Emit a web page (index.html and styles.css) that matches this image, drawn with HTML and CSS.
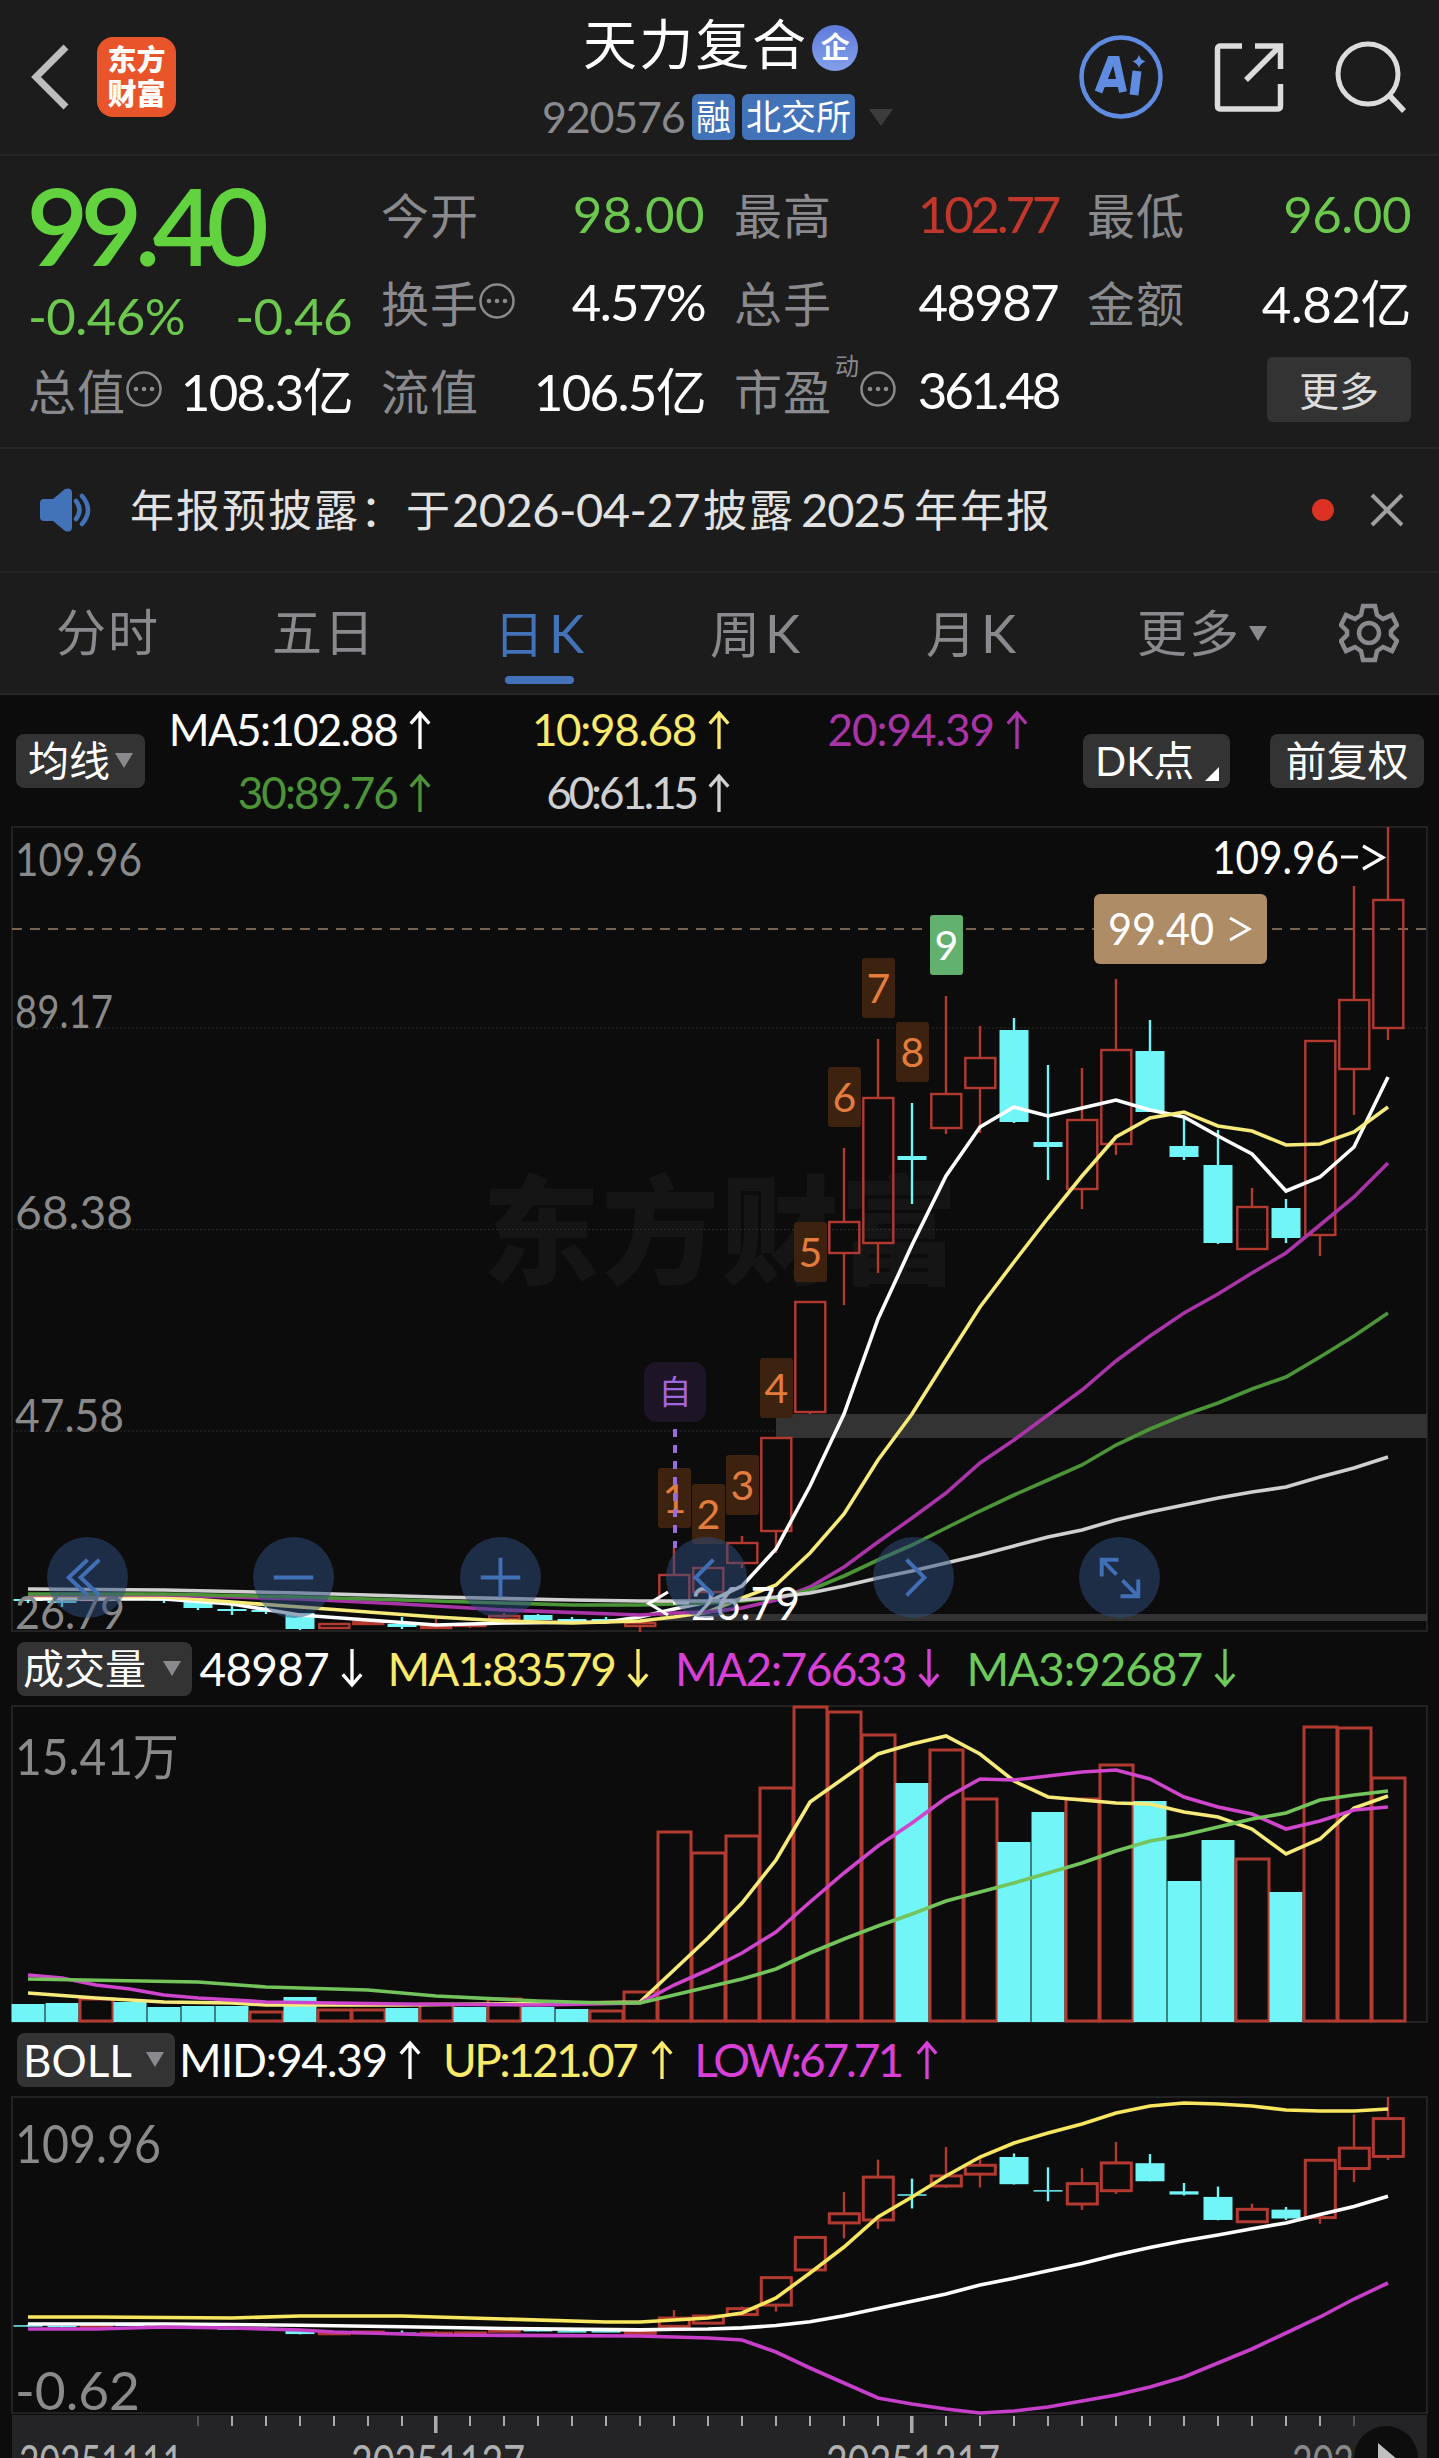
FILE: index.html
```html
<!DOCTYPE html>
<html lang="zh-CN">
<head>
  <meta charset="UTF-8" />
  <meta name="viewport" content="width=device-width, initial-scale=1" />
  <title>天力复合 920576</title>
  <link rel="stylesheet" href="styles.css">
</head>
<body>

  <svg class="defs" width="0" height="0">
    <symbol id="arrow-up" viewBox="0 0 22 40"><path d="M11 40V3M1.5 14L11 3l9.500 11" fill="none" stroke="currentColor" stroke-width="3.400" /></symbol>
    <symbol id="arrow-down" viewBox="0 0 22 40"><path d="M11 0v37M1.500 26L11 37l9.500-11" fill="none" stroke="currentColor" stroke-width="3.400" /></symbol>
    <symbol id="info" viewBox="0 0 36 36">
      <circle cx="18" cy="18" r="16.500" fill="none" stroke="currentColor" stroke-width="2.500" />
      <circle cx="10" cy="18" r="2.300" fill="currentColor" /><circle cx="18" cy="18" r="2.300" fill="currentColor" /><circle cx="26" cy="18" r="2.300" fill="currentColor" />
    </symbol>
  </svg>

  <header class="topbar">
    <div class="topbar-left">
      <svg class="back" width="40" height="66" viewBox="0 0 40 66"><path d="M36 3L6 33l30 30" fill="none" stroke="#bdbdbd" stroke-width="7" /></svg>
      <div class="logo"><span>东方</span><span>财富</span></div>
    </div>
    <div class="stock">
      <div class="stock-name">天力复合<span class="corp">企</span></div>
      <div class="stock-code">
        <span class="code">920576</span>
        <span class="tag tag-rong">融</span>
        <span class="tag tag-bse">北交所</span>
        <span class="tri tri-dark"></span>
      </div>
    </div>
    <div class="topbar-icons">
      <svg width="84" height="84" viewBox="0 0 84 84">
        <circle cx="42" cy="42" r="39.500" fill="none" stroke="#5f8ce0" stroke-width="4.500" />
        <g fill="none" stroke="#5f8ce0" stroke-width="8"><path d="M19.500 57L32 25h5l7 32M25 48h15" /><path d="M58 36l-3 24" stroke-width="9" /></g>
        <path d="M60 20q1.500 5 6.500 6.500q-5 1.500-6.500 6.500q-1.500-5-6.500-6.500q5-1.500 6.500-6.500z" fill="#5f8ce0" />
      </svg>
      <svg width="70" height="70" viewBox="0 0 70 70"><path d="M28 4H7Q3.500 4 3.500 7v57q0 3 3.500 3h56q3.500 0 3.500-3V42M41 4h25.500v23M65 5L32 38" fill="none" stroke="#dcdcdc" stroke-width="5.500" /></svg>
      <svg width="72" height="72" viewBox="0 0 72 72"><circle cx="33" cy="33" r="30" fill="none" stroke="#dcdcdc" stroke-width="5" /><path d="M54 54l15 16" stroke="#dcdcdc" stroke-width="5.500" /></svg>
    </div>
  </header>

  <section class="quote">
    <div class="quote-col">
      <div class="price">99.40</div>
      <div class="change green"><span>-0.46%</span><span>-0.46</span></div>
      <div class="cell"><label>总值<svg class="info"><use href="#info" /></svg></label><b class="snug">108.3亿</b></div>
    </div>
    <div class="quote-col">
      <div class="cell"><label>今开</label><b class="green wide">98.00</b></div>
      <div class="cell"><label>换手<svg class="info"><use href="#info" /></svg></label><b class="snug">4.57%</b></div>
      <div class="cell"><label>流值</label><b class="snug">106.5亿</b></div>
    </div>
    <div class="quote-col">
      <div class="cell"><label>最高</label><b class="red tight">102.77</b></div>
      <div class="cell"><label>总手</label><b class="snug">48987</b></div>
      <div class="cell"><label>市盈<sup>动</sup><svg class="info"><use href="#info" /></svg></label><b class="tight">361.48</b></div>
    </div>
    <div class="quote-col">
      <div class="cell"><label>最低</label><b class="green">96.00</b></div>
      <div class="cell"><label>金额</label><b>4.82亿</b></div>
      <div class="cell cell-end"><button class="btn-more">更多</button></div>
    </div>
  </section>

  <section class="notice">
    <svg width="52" height="44" viewBox="0 0 52 44">
      <path d="M4 11h9L25 1q7-2 7 4v34q0 6-7 4L13 33H4q-4 0-4-4V15q0-4 4-4z" fill="#4272b8" />
      <path d="M36 13q7 9 0 18M42 8q12 14 0 28" fill="none" stroke="#4272b8" stroke-width="4.500" stroke-linecap="round" />
    </svg>
    <p>年报预披露：于<i>2026-04-27</i>披露<i class="year">2025</i>年年报</p>
    <span class="dot"></span>
    <svg width="34" height="34" viewBox="0 0 34 34"><path d="M2 2l30 30M32 2L2 32" stroke="#a0a0a0" stroke-width="4" /></svg>
  </section>

  <nav class="tabs">
    <a>分时</a>
    <a>五日</a>
    <a class="active">日<i>K</i></a>
    <a>周<i>K</i></a>
    <a>月<i>K</i></a>
    <a class="tab-more">更多<span class="tri"></span></a>
    <svg width="60" height="60" viewBox="0 0 60 60" fill="none" stroke="#8a8a8e" stroke-width="4.500">
      <path d="M24 3h12l2 9 6 4 9-4 5 10-6 6v4l6 6-5 10-9-4-6 4-2 9H24l-2-9-6-4-9 4-5-10 6-6v-4l-6-6 5-10 9 4 6-4z" />
      <circle cx="30" cy="30" r="10" />
    </svg>
  </nav>

  <section class="legend">
    <button class="chip chip-ma">均线<span class="tri"></span></button>
    <div class="ma-grid">
      <span class="c-white m5">MA5:102.88<svg class="arw"><use href="#arrow-up" /></svg></span>
      <span class="c-yellow m10">10:98.68<svg class="arw"><use href="#arrow-up" /></svg></span>
      <span class="c-purple">20:94.39<svg class="arw"><use href="#arrow-up" /></svg></span>
      <span class="c-green m30">30:89.76<svg class="arw"><use href="#arrow-up" /></svg></span>
      <span class="c-grey m60">60:61.15<svg class="arw"><use href="#arrow-up" /></svg></span>
    </div>
    <button class="chip chip-dk">DK点<span class="corner"></span></button>
    <button class="chip chip-fq">前复权</button>
  </section>

  <section class="k-chart">
    <svg id="k-chart" width="1439" height="806" viewBox="0 826 1439 806"></svg>
    <div class="controls">
      <button><svg viewBox="0 0 82 82"><path d="M41 23L22 41l19 18M53 23L34 41l19 18" /></svg></button>
      <button><svg viewBox="0 0 82 82"><path d="M21 41h40" /></svg></button>
      <button><svg viewBox="0 0 82 82"><path d="M21 41h40M41 21v40" /></svg></button>
      <button><svg viewBox="0 0 82 82"><path d="M48 23L30 41l18 18" /></svg></button>
      <button><svg viewBox="0 0 82 82"><path d="M34 23l18 18-18 18" /></svg></button>
      <button><svg viewBox="0 0 82 82"><path d="M38 38L23 23M23 40V23h17M44 44l15 15M60 43v17H42" /></svg></button>
    </div>
  </section>

  <section class="indicator">
    <button class="chip chip-vol">成交量<span class="tri"></span></button>
    <span class="c-white v0">48987<svg class="arw"><use href="#arrow-down" /></svg></span>
    <span class="c-yellow v1">MA1:83579<svg class="arw"><use href="#arrow-down" /></svg></span>
    <span class="c-magenta v2">MA2:76633<svg class="arw"><use href="#arrow-down" /></svg></span>
    <span class="c-lime v3">MA3:92687<svg class="arw"><use href="#arrow-down" /></svg></span>
  </section>
  <svg id="vol-chart" class="chart" width="1439" height="318" viewBox="0 1705 1439 318"></svg>

  <section class="indicator">
    <button class="chip chip-boll">BOLL<span class="tri"></span></button>
    <span class="c-white b0">MID:94.39<svg class="arw"><use href="#arrow-up" /></svg></span>
    <span class="c-yellow b1">UP:121.07<svg class="arw"><use href="#arrow-up" /></svg></span>
    <span class="c-magenta b2">LOW:67.71<svg class="arw"><use href="#arrow-up" /></svg></span>
  </section>
  <svg id="boll-chart" class="chart" width="1439" height="362" viewBox="0 2096 1439 362"></svg>

  <script>
    const RED = "#b23a31", CYAN = "#71f5f7";
    const STEP = 34, X0 = 28;
    const cx = i => X0 + i * STEP;

    // [up?, body top, body bottom, high, low]
    const candles = [
      [0,1599,1601,1597,1603],[0,1601,1603,1600,1607],[1,1599,1600,1598,1601],[0,1597,1598,1596,1599],[0,1599,1600,1599,1603],
      [0,1602,1608,1602,1610],[0,1609,1611,1605,1615],[0,1610,1612,1606,1614],[0,1613,1629,1613,1630],[1,1624,1628,1623,1629],
      [1,1622,1624,1621,1625],[0,1624,1627,1617,1629],[1,1626,1628,1619,1628],[1,1625,1626,1624,1628],[1,1616,1619,1613,1619],
      [0,1615,1620,1614,1620],[0,1619,1621,1617,1621],[0,1619,1621,1617,1621],[1,1623,1626,1622,1632],[1,1575,1603,1548,1603],
      [1,1568,1592,1568,1592],[1,1543,1563,1536,1568],[1,1438,1531,1438,1553],[1,1302,1412,1302,1414],[1,1222,1253,1148,1305],
      [1,1098,1243,1039,1273],[0,1156,1160,1103,1204],[1,1094,1128,996,1134],[1,1058,1088,1026,1133],[0,1030,1122,1018,1123],
      [0,1142,1147,1065,1180],[1,1120,1189,1068,1209],[1,1050,1144,979,1155],[0,1051,1112,1020,1112],[0,1146,1157,1118,1160],
      [0,1165,1243,1130,1244],[1,1207,1249,1188,1249],[0,1208,1238,1199,1243],[1,1041,1235,1041,1256],[1,1000,1069,886,1115],[1,900,1028,827,1040]
    ];
    const volume = [2004,2003,1998,2002,2007,2006,2006,2011,1997,2009,2009,2008,2003,2007,1998,2007,2009,2010,1991,1831,1852,1835,1787,1706,1711,1734,1783,1749,1798,1842,1812,1798,1764,1801,1881,1840,1858,1892,1726,1727,1777];
    const volDown = [0,1,3,4,5,6,8,11,13,15,16,26,29,30,33,34,35,37];

    // lines are [candle index, y] for the flat stretch, then one y per candle
    const ma5 = line([[0,1599],[4,1599],[6,1604],[8,1615],[10,1620],[12,1625],[14,1623],[17,1622],[18,1617]], [1609,1602,1586,1549,1486,1414,1319,1245,1176,1127,1107,1116,1108,1100,1110,1117,1136,1154,1191,1177,1147,1077]);
    const ma10 = line([[0,1596],[4,1597],[6,1602],[8,1607],[10,1612],[12,1617],[14,1621],[16,1623],[18,1621]], [1617,1612,1598,1585,1553,1514,1460,1414,1360,1307,1262,1218,1176,1137,1118,1112,1126,1131,1145,1144,1132,1107]);
    const ma20 = line([[0,1595],[4,1595],[8,1599],[11,1604],[14,1610],[18,1615]], [1613,1612,1608,1600,1587,1567,1542,1518,1493,1463,1440,1415,1390,1361,1336,1313,1294,1273,1253,1225,1197,1163]);
    const ma30 = line([[0,1594],[4,1594],[8,1597],[12,1601],[16,1605],[18,1605]], [1604,1603,1601,1598,1590,1576,1560,1545,1528,1511,1495,1480,1465,1445,1429,1415,1403,1389,1377,1357,1336,1313]);
    const ma60 = line([[0,1589],[4,1590],[8,1593],[12,1597],[16,1600],[18,1601]], [1601,1601,1600,1597,1593,1586,1578,1571,1563,1555,1546,1537,1530,1520,1512,1505,1498,1492,1487,1477,1468,1457]);
    const vol1 = line([[0,1993],[2,1998],[4,2002],[6,2003],[7,2005],[11,2005],[16,2003],[18,2002]], [1970,1938,1903,1860,1802,1778,1754,1744,1736,1754,1781,1797,1800,1803,1804,1812,1817,1829,1854,1839,1808,1796]);
    const vol2 = line([[0,1975],[1,1978],[2,1985],[3,1989],[4,1995],[5,1998],[7,2002],[11,2004],[15,2005],[18,2003]], [1985,1970,1953,1932,1902,1873,1846,1823,1798,1779,1780,1776,1772,1770,1779,1797,1807,1814,1829,1821,1810,1807]);
    const vol3 = line([[0,1979],[5,1982],[7,1987],[10,1990],[12,1996],[15,2001],[17,2003],[18,2003]], [1995,1987,1979,1969,1953,1939,1926,1914,1901,1892,1883,1873,1863,1851,1841,1835,1827,1819,1813,1800,1795,1791]);
    const up = line([[0,2317],[2,2317],[6,2318],[8,2316],[11,2316],[14,2319],[17,2322],[18,2322]], [2320,2318,2313,2298,2273,2247,2217,2197,2176,2157,2143,2133,2124,2113,2106,2103,2104,2106,2110,2111,2111,2109]);
    const low = line([[0,2329],[2,2329],[4,2327],[6,2328],[8,2330],[9,2332],[12,2335],[18,2336]], [2337,2338,2340,2352,2368,2383,2398,2404,2409,2413,2411,2407,2401,2395,2387,2377,2363,2349,2333,2317,2299,2283]);

    function line(flat, rest) {
      return flat.concat(rest.map((y, k) => [19 + k, y]));
    }

    // price chart y -> BOLL chart y
    const bollY = y => 2097 + (y - 827) * 0.2956;

    function path(points, color, w, f = y => y) {
      return `<polyline points="${points.map(p => cx(p[0]) + "," + f(p[1]).toFixed(1)).join(" ")}" fill="none" stroke="${color}" stroke-width="${w}" />`;
    }
    function rect(x, y, w, h, fill, extra = "") {
      return `<rect x="${x}" y="${y}" width="${w}" height="${h}" fill="${fill}" ${extra}/>`;
    }
    function hline(y, color, extra = "") {
      return `<line x1="12" x2="1427" y1="${y}" y2="${y}" stroke="${color}" ${extra}/>`;
    }
    function label(x, y, size, color, str, len) {
      return `<text x="${x}" y="${y}" font-size="${size}" fill="${color}" textLength="${len}" lengthAdjust="spacingAndGlyphs">${str}</text>`;
    }
    function candle(c, i, f, sw) {
      const x = cx(i), [isUp, t, b, hi, lo] = [c[0], f(c[1]), f(c[2]), f(c[3]), f(c[4])];
      if (!isUp) {
        return rect(x - 14.5, t, 29, Math.max(b - t, 1.5), CYAN) + rect(x - 1.2, hi, 2.4, lo - hi, CYAN);
      }
      return rect(x - 1.2, hi, 2.4, t - hi, RED) + rect(x - 1.2, b, 2.4, lo - b, RED) +
        rect(x - 14.7, t, 30, Math.max(b - t, 1), "none", `stroke="${RED}" stroke-width="${sw}"`);
    }
    const frame = (y, h) => rect(12, y, 1415, h, "none", 'stroke="#222223" stroke-width="2"');

    // price
    let k = `<text class="watermark" x="482" y="1275" font-size="118" textLength="476">东方财富</text>`;
    k += frame(827, 804);
    [1028, 1229.5, 1431].forEach(y => k += hline(y, "#2a2a2a", 'stroke-dasharray="2 2"'));
    k += rect(776, 1414, 651, 24, "#333") + rect(660, 1614, 767, 7, "#333");
    k += hline(929, "#786550", 'stroke-width="2" stroke-dasharray="10 8"');
    candles.forEach((c, i) => k += candle(c, i, y => y, 2.4));
    const nine = [[658,1468],[692,1484],[726,1455],[760,1358],[794,1222],[828,1067],[862,958],[896,1022],[930,915]];
    nine.forEach(([x, y], n) => {
      const last = n === 8;
      k += rect(x, y, 33, 60, last ? "#63b16f" : "#3d2210", 'rx="3"');
      k += `<text x="${x + 16.5}" y="${y + 45}" font-size="41" text-anchor="middle" fill="${last ? "#fff" : "#e37c3c"}">${n + 1}</text>`;
    });
    k += rect(644, 1362, 62, 60, "#1d1426", 'rx="13"') + `<text x="675" y="1404" font-size="33" text-anchor="middle" fill="#a367dd">自</text>`;
    k += `<line x1="675" x2="675" y1="1429" y2="1548" stroke="#9a6bdc" stroke-width="4" stroke-dasharray="8 8" />`;
    k += path(ma5, "#fff", 3.6) + path(ma10, "#f6ea7a", 3.6) + path(ma20, "#a934a8", 3.6) + path(ma30, "#4c9438", 3.6) + path(ma60, "#d0d0d0", 3.6);
    k += label(15, 876, 46, "#8a8a8a", "109.96", 127) + label(15, 1028, 46, "#8a8a8a", "89.17", 98) + label(15, 1229, 46, "#8a8a8a", "68.38", 118) + label(15, 1432, 46, "#8a8a8a", "47.58", 109) + label(15, 1629, 46, "#8a8a8a", "26.79", 110);
    k += rect(1094, 894, 173, 70, "#ae8c65", 'rx="6"') + label(1108, 945, 44, "#fff", "99.40", 106) + `<path d="M1230 918l19 11-19 11" fill="none" stroke="#fff" stroke-width="3" />`;
    k += label(1212, 874, 46, "#fff", "109.96", 127) + `<path d="M1341 857h17M1363 846l20 11.500-20 11.500" fill="none" stroke="#fff" stroke-width="3.200" />`;
    k += `<path d="M668 1592l-19 11.500 19 11.500M673 1603h16" fill="none" stroke="#fff" stroke-width="3.200" />` + label(691, 1620, 46, "#fff", "26.79", 109);
    document.getElementById("k-chart").innerHTML = k;

    // volume
    let v = frame(1706, 316);
    volume.forEach((y, i) => {
      const x = cx(i) - 17;
      v += volDown.includes(i) ? rect(x + .5, y, 33, 2022 - y, CYAN) : rect(x + 1, y + 1, 33, 2020 - y, "none", `stroke="${RED}" stroke-width="3"`);
    });
    v += path(vol1, "#f6ea7a", 3.6) + path(vol2, "#cf45cc", 3.6) + path(vol3, "#74c45c", 3.6);
    v += label(15, 1775, 50, "#8a8a8a", "15.41万", 164);
    document.getElementById("vol-chart").innerHTML = v;

    // BOLL and date axis
    let b = frame(2097, 316);
    candles.forEach((c, i) => b += candle(c, i, bollY, 3));
    b += path(ma20, "#fff", 3.6, bollY) + path(up, "#f6e660", 3.6) + path(low, "#c73fc9", 3.6);
    b += label(15, 2163, 53, "#8a8a8a", "109.96", 146) + label(15, 2410, 53, "#8a8a8a", "-0.62", 125);
    b += rect(12, 2415, 1415, 43, "#242426");
    for (let i = 5; i <= 39; i++) {
      const major = i === 12 || i === 26;
      b += rect(cx(i) - (major ? 2 : 1), 2416, major ? 3.5 : 2, major ? 17 : 10, i === 5 || i === 39 ? "#555" : "#aaa");
    }
    b += label(19, 2478, 46, "#b0b0b0", "20251111", 164) + label(351, 2478, 46, "#b0b0b0", "20251127", 174) + label(826, 2478, 46, "#b0b0b0", "20251217", 174) + label(1292, 2478, 46, "#8a8a8a", "202", 62);
    b += `<circle cx="1386" cy="2458" r="32" fill="#0d0d0d" /><path d="M1378 2443l20 17-20 17z" fill="#c0c0c0" />`;
    document.getElementById("boll-chart").innerHTML = b;
  </script>

</body>
</html>
```

FILE: styles.css
```css
* {
  box-sizing: border-box;
}
body {
  margin: 0;
  width: 1439px;
  height: 2458px;
  overflow: hidden;
  background: #0c0c0c;
  color: #fff;
  font-family: Lato, "Noto Sans CJK SC", sans-serif;
}
button {
  font-family: inherit;
  border: none;
  padding: 0;
  color: #fff;
}
svg {
  display: block;
  flex-shrink: 0;
}
svg text {
  font-family: Lato, "Noto Sans CJK SC", sans-serif;
}
.defs {
  position: absolute;
}

.green { color: #6cc84e; }
.red { color: #c2372b; }
.c-white { color: #fff; }
.c-yellow { color: #f9ea6c; }
.c-purple { color: #a934a8; }
.c-green { color: #4c9438; }
.c-grey { color: #d0d0d0; }
.c-magenta { color: #d840d8; }
.c-lime { color: #6cc95a; }

.tri {
  width: 0;
  height: 0;
  border: 9px solid transparent;
  border-top: 15px solid #8a8a8e;
  border-bottom: 0;
}
.tri-dark {
  border-width: 12px;
  border-top: 17px solid #3c3c3e;
  border-bottom: 0;
  margin-left: 14px;
}

/* top bar */
.topbar {
  height: 156px;
  background: #1c1c1c;
  border-bottom: 2px solid #262627;
  display: grid;
  grid-template-columns: 542px 1fr 360px;
}
.topbar-left {
  display: flex;
  align-items: center;
  padding-left: 30px;
}
.logo {
  width: 79px;
  height: 80px;
  margin-left: 27px;
  border-radius: 16px;
  background: #e9552b;
  display: flex;
  flex-direction: column;
  align-items: center;
  justify-content: center;
  font-size: 29px;
  line-height: 34px;
  font-weight: 900;
}
.stock-name {
  display: flex;
  align-items: center;
  height: 58px;
  line-height: 58px;
  margin: 16px 0 0 41px;
  font-size: 54px;
  letter-spacing: 2.300px;
}
.corp {
  width: 46px;
  height: 46px;
  margin: 5px 0 0 4px;
  border-radius: 50%;
  background: linear-gradient(#5f7bdc, #83a0e8);
  font-size: 29px;
  line-height: 44px;
  letter-spacing: 0;
  font-weight: 700;
  text-align: center;
}
.stock-code {
  display: flex;
  align-items: center;
  margin-top: 20px;
  height: 46px;
}
.code {
  width: 150px;
  font-size: 43px;
  line-height: 46px;
  letter-spacing: -1.200px;
  color: #8a8a8e;
}
.tag {
  height: 46px;
  border-radius: 6px;
  background: #4272b8;
  font-size: 35px;
  line-height: 44px;
  text-align: center;
}
.tag-rong { width: 43px; margin-right: 7px; }
.tag-bse { width: 113px; }
.topbar-icons {
  display: flex;
  align-items: center;
  gap: 51px;
}

/* quote */
.quote {
  height: 293px;
  padding: 13px 29px 0 28px;
  background: #1c1c1c;
  border-bottom: 2px solid #262627;
  display: grid;
  grid-template-columns: repeat(4, 324px);
  column-gap: 29px;
}
.price {
  height: 115px;
  line-height: 111px;
  font-size: 105px;
  letter-spacing: -6.800px;
  margin-left: -1px;
  color: #62d33f;
  -webkit-text-stroke: 2px #62d33f;
}
.change {
  height: 61px;
  line-height: 63px;
  font-size: 51px;
  letter-spacing: -.600px;
  display: flex;
  justify-content: space-between;
}
.cell {
  height: 88px;
  display: flex;
  align-items: center;
  justify-content: space-between;
}
.cell-end {
  justify-content: flex-end;
}
.cell label {
  display: flex;
  align-items: center;
  font-size: 48px;
  letter-spacing: 1px;
  color: #8a8a8e;
}
.cell label sup {
  align-self: flex-start;
  font-size: 24px;
  line-height: 24px;
  width: 28px;
  padding-left: 3px;
}
.cell b {
  font-weight: 400;
  font-size: 51px;
  letter-spacing: -.500px;
}
.cell .snug { letter-spacing: -1.700px; }
.cell .tight { letter-spacing: -3.300px; }
.cell .wide { letter-spacing: .400px; }
.info {
  width: 36px;
  height: 36px;
}
.btn-more {
  width: 144px;
  height: 65px;
  border-radius: 6px;
  background: #333;
  color: #ddd;
  font-size: 40px;
}

/* notice */
.notice {
  height: 124px;
  padding: 0 35px 0 40px;
  background: #1c1c1c;
  border-bottom: 2px solid #262627;
  display: flex;
  align-items: center;
}
.notice p {
  flex-grow: 1;
  margin: -4px 0 0 38px;
  font-size: 44px;
  letter-spacing: 2px;
  color: #e2e2e2;
}
.notice i {
  font-style: normal;
  font-size: 47px;
  letter-spacing: -.500px;
  margin-right: 3px;
}
.notice .year {
  margin: 0 8px 0 6px;
  letter-spacing: -1px;
}
.dot {
  width: 22px;
  height: 22px;
  margin-right: 36px;
  border-radius: 50%;
  background: #dc3224;
}

/* tabs */
.tabs {
  height: 122px;
  background: #1c1c1c;
  border-bottom: 2px solid #262627;
  display: flex;
  align-items: center;
}
.tabs a {
  width: 216px;
  height: 120px;
  line-height: 119px;
  text-align: center;
  font-size: 50px;
  letter-spacing: 2px;
  color: #8a8a8e;
}
.tabs i {
  font-style: normal;
  font-size: 53px;
  margin-left: 3px;
}
.tabs .active {
  color: #4272b8;
  position: relative;
}
.active::after {
  content: "";
  position: absolute;
  left: 73px;
  bottom: 9px;
  width: 69px;
  height: 8px;
  border-radius: 4px;
  background: #4272b8;
}
.tabs .tab-more {
  width: 259px;
  padding-left: 57px;
  display: flex;
  align-items: center;
}
.tab-more .tri {
  margin-left: 8px;
}

/* legends */
.chip {
  height: 54px;
  border-radius: 8px;
  background: #333;
  font-size: 41px;
  line-height: 52px;
  display: flex;
  align-items: center;
  justify-content: center;
}
.legend {
  height: 131px;
  padding: 0 15px 0 16px;
  display: flex;
  align-items: center;
}
.chip-ma { width: 129px; }
.chip-ma .tri { margin-left: 5px; }
.chip-dk {
  width: 147px;
  margin-left: 55px;
  justify-content: flex-start;
  padding-left: 12px;
}
.chip-fq { width: 154px; margin-left: 40px; }
.corner {
  align-self: flex-end;
  margin: 0 0 7px 11px;
  border-left: 14px solid transparent;
  border-bottom: 14px solid #fff;
}
.ma-grid {
  width: 883px;
  height: 126px;
  display: grid;
  grid-template-columns: 286px 299px 298px;
  grid-template-rows: 63px 63px;
}
.ma-grid span,
.indicator span {
  display: flex;
  align-items: center;
  justify-content: flex-end;
}
.ma-grid span {
  font-size: 44px;
  letter-spacing: -1px;
}
.ma-grid .m5 { letter-spacing: -1.700px; }
.ma-grid .m10 { letter-spacing: -1.300px; }
.ma-grid .m30 { letter-spacing: -1.900px; }
.ma-grid .m60 { letter-spacing: -3.100px; }
.arw {
  width: 22px;
  height: 39px;
  margin-left: 12px;
}
.indicator {
  height: 73px;
  padding-left: 17px;
  display: flex;
  align-items: center;
  font-size: 46px;
}
.indicator .chip {
  justify-content: space-between;
  padding: 0 11px 0 6px;
}
.chip-vol { width: 175px; }
.chip-boll { width: 158px; font-size: 44px; }
.v0 { width: 171px; }
.v1 { width: 286px; }
.v2 { width: 291px; }
.v3 { width: 296px; }
.b0 { width: 246px; }
.b1 { width: 252px; }
.b2 { width: 265px; }
.indicator > span { letter-spacing: -.800px; }
.indicator .v1 { letter-spacing: -2px; }
.indicator .v2 { letter-spacing: -1.600px; }
.indicator .v3 { letter-spacing: -1.100px; }
.indicator .b0 { letter-spacing: -1.300px; }
.indicator .b1 { letter-spacing: -2.700px; }
.indicator .b2 { letter-spacing: -3.100px; }
.indicator .b1 .arw,
.indicator .b2 .arw { margin-left: 15px; }

/* charts */
.k-chart {
  position: relative;
}
.watermark {
  font-weight: 900;
  fill: #151516;
}
.controls {
  position: absolute;
  left: 47px;
  top: 711px;
  display: flex;
  gap: 125.400px;
}
.controls button {
  width: 81px;
  height: 81px;
  border-radius: 50%;
  background: rgba(48, 78, 128, .5);
}
.controls path {
  fill: none;
  stroke: #416fb5;
  stroke-width: 4;
}
```
